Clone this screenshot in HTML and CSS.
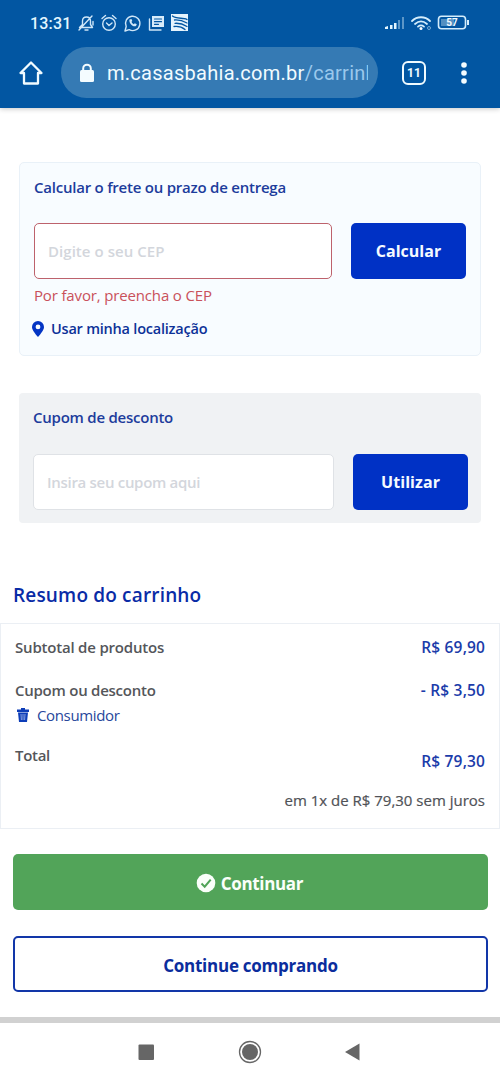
FILE: index.html
```html
<!DOCTYPE html>
<html lang="pt-BR">
<head>
<meta charset="utf-8">
<meta name="viewport" content="width=device-width, initial-scale=1">
<title>Carrinho</title>
<link rel="stylesheet" href="styles.css">
</head>
<body>
<header class="browser">
  <div class="status">
    <span class="clock">13:31</span>
    <svg class="status-left" width="112" height="20" viewBox="0 0 112 20" fill="none" stroke="#cfe6f8" stroke-width="1.4" stroke-linecap="round" stroke-linejoin="round">
      <path d="M1.500 14.500h13l-2-3V8c0-3-2-4-4-4S4.500 5 4.500 8v3.500l-3 3M7 17h3M14 3 1 17M15 8.500v3.500"/>
      <circle cx="31" cy="11" r="6.300"/><path d="M28.500 10l2.500 2.500 3-2.500M24 5.500 27.500 2.500M34.500 2.500l3.500 3"/>
      <path d="M47 18l1.200-4.500a7.200 7.200 0 1 1 3 3.200z"/>
      <path d="M51.500 6.500c-1 3.500 3.500 8 6.500 6.500l.8-1.800-2-1-1 1c-1-.5-2-1.500-2.300-2.500l.8-.8-.8-1.800z" fill="#cfe6f8" stroke="none"/>
      <path d="M74 3h12v11H74z" fill="#d8ecfb" stroke="none"/><path d="M71.500 6v11H83"/><path d="M76.500 6h7M76.500 8.700h7M76.500 11.300h4" stroke="#0256a2" stroke-width="1.200"/>
      <path d="M93 1h17v17H93z" fill="#e6f4fd" stroke="none"/>
      <path d="M94.500 3c2 2 7 2 11 2.500 2 .2 3 .5 3.500 1M96.500 7c4-.3 8 .5 12.500 3M97 10.300c4-.3 8 .7 12 3.200M96 13.500c4-.5 8 .5 11 3" stroke="#0256a2" stroke-width="1.300"/>
    </svg>
    <svg class="status-right" width="86" height="18" viewBox="0 0 86 18">
      <path d="M1 15v-2l3-1v3zM6 15v-4h2.500v4zM10 15V9h2.500v6z" fill="#e3f5ff"/><path d="M14 15V6h2v9zM18 15V3h2v12z" fill="#5c96c7"/>
      <g fill="none" stroke="#d4edfc" stroke-width="1.800" stroke-linecap="round"><path d="M28 7c5-5 13-5 18 0M31 10c4-3.500 8-3.500 12 0M34 12.600c2-1.600 4-1.600 6 0"/></g><circle cx="37" cy="14.500" r="1.500" fill="#fff"/><circle cx="45" cy="14" r="1.500" fill="none" stroke="#78add5"/>
      <rect x="54.500" y="2.200" width="27" height="12.600" rx="3" fill="none" stroke="#d4edfc" stroke-width="1.600"/><path d="M57 5h13v7H57z" fill="#538fc1"/><path d="M83 6h2v5h-2z" fill="#d4edfc"/>
      <text x="68" y="12.300" text-anchor="middle" class="battery-text">57</text>
    </svg>
  </div>
  <div class="toolbar">
    <svg class="home" width="26" height="26" viewBox="0 0 26 26" fill="none" stroke="#f1fbff" stroke-width="2.300" stroke-linejoin="round" stroke-linecap="round"><path d="M2.500 13 13 2.500 23.500 13H20v10.500H6V13z"/></svg>
    <div class="address">
      <svg width="16" height="20" viewBox="0 0 16 20"><path d="M4.200 8V5.500a3.800 3.800 0 0 1 7.600 0V8" fill="none" stroke="#f4fcff" stroke-width="2"/><rect x="1" y="7" width="14" height="12" rx="1.500" fill="#f4fcff"/></svg>
      <span class="url">m.casasbahia.com.br<span class="path">/carrinh</span></span>
    </div>
    <span class="tabs">11</span>
    <svg class="more" width="8" height="24" viewBox="0 0 8 24" fill="#f4fcff"><circle cx="4" cy="4" r="2.800"/><circle cx="4" cy="12" r="2.800"/><circle cx="4" cy="20" r="2.800"/></svg>
  </div>
</header>
<main class="page">
  <section class="card shipping">
    <h2><span class="t-ship">Calcular o frete ou prazo de entrega</span></h2>
    <div class="row"><div class="field invalid"><span class="t-cep">Digite o seu CEP</span></div><button class="btn"><span class="t-calc">Calcular</span></button></div>
    <p class="error"><span class="t-err">Por favor, preencha o CEP</span></p>
    <a class="locate"><svg width="14" height="18" viewBox="0 0 14 18"><path fill="#0435c4" fill-rule="evenodd" d="M7 1a6 6 0 0 0-6 6c0 3 3 6.500 6 10 3-3.500 6-7 6-10a6 6 0 0 0-6-6zm0 3.500a2.400 2.400 0 1 1 0 4.800 2.400 2.400 0 0 1 0-4.800z"/></svg><span class="t-loc">Usar minha localização</span></a>
  </section>
  <section class="card coupon">
    <h2><span class="t-cup">Cupom de desconto</span></h2>
    <div class="row"><div class="field"><span class="t-ins">Insira seu cupom aqui</span></div><button class="btn"><span class="t-util">Utilizar</span></button></div>
  </section>
  <h1><span class="t-res">Resumo do carrinho</span></h1>
  <section class="summary">
    <div class="line subtotal"><span class="t-sub">Subtotal de produtos</span><b class="t-price">R$ 69,90</b></div>
    <div class="line discount"><span class="t-disc">Cupom ou desconto</span><b class="t-price">- R$ 3,50</b></div>
    <div class="applied"><svg width="12" height="15" viewBox="0 0 12 15"><path fill="#0d3db8" d="M4 0h4v1.500h4V4H0V1.500h4zM1 4.500h10l-1 9.500H2z"/><path d="M4 6l.4 6M6 6v6M8 6l-.4 6" stroke="#b9c9ee" stroke-width=".7"/></svg><span class="t-cons">Consumidor</span></div>
    <div class="line total"><span class="t-tot">Total</span><b class="t-price">R$ 79,30</b></div>
    <p class="installments"><span class="t-inst">em 1x de R$ 79,30 sem juros</span></p>
  </section>
  <button class="action go"><svg width="20" height="20" viewBox="0 0 20 20"><circle cx="10" cy="10" r="9.300" fill="#fafffa"/><path d="M5.500 10.500l3.200 3.200 6-7" fill="none" stroke="#50a458" stroke-width="2"/></svg><span class="t-go">Continuar</span></button>
  <button class="action keep"><span class="t-keep">Continue comprando</span></button>
</main>
<nav class="system">
  <svg width="500" height="59" viewBox="0 0 500 59" fill="#666"><rect x="138.500" y="21.500" width="15.500" height="15.500" rx="1"/><circle cx="250" cy="29" r="10.500" fill="none" stroke="#666" stroke-width="1.300"/><circle cx="250" cy="29" r="8"/><path d="M345 29l14.500-8.500v17z"/></svg>
</nav>
</body>
</html>
```

FILE: styles.css
```css
* { box-sizing: border-box; }
body { margin: 0; width: 500px; height: 1082px; overflow: hidden; background: #fff; color: #54565a; font-family: "Open Sans", "Noto Sans", sans-serif; display: flex; flex-direction: column; }
h1, h2, p { margin: 0; }
button { border: 0; font-family: inherit; padding: 0; }
span, b { white-space: nowrap; }
svg { display: block; flex: none; }

.browser { height: 108px; flex: none; background: #0256a2; font-family: Roboto, sans-serif; box-shadow: 0 1px 5px rgba(0, 0, 0, .22); }
.status { height: 47px; padding: 0 30px; display: flex; align-items: center; }
.clock { font-size: 16px; font-weight: 500; color: #e4f7ff; letter-spacing: .2px; width: 49px; }
.status-left { margin: -1px 0 0 0; }
.status-right { margin: -1px 0 0 194px; }
.status-left { margin-left: 1px; }
.battery-text { font: 700 10px Roboto, sans-serif; fill: #f2fbff; }
.toolbar { height: 51px; display: flex; align-items: center; padding-left: 18px; }
.address { width: 317px; height: 51px; margin-left: 17px; padding-left: 18px; border-radius: 26px; background: #357ab4; display: flex; align-items: center; gap: 12px; }
.url { width: 261px; overflow: hidden; color: #f1fbff; font-size: 20px; line-height: 28px; letter-spacing: .27px; }
.path { color: #9ac8ec; }
.tabs { width: 24px; height: 24px; margin-left: 24px; border: 2.500px solid #f1fbff; border-radius: 6px; color: #f1fbff; font-size: 12px; font-weight: 700; line-height: 20px; text-align: center; }
.more { margin-left: 34px; }

.page { flex: none; height: 909px; padding-top: 54px; }
.card { margin: 0 19px; border-radius: 5px; }
.card h2 { font-size: 15px; font-weight: 600; line-height: 22px; color: #1d3c9c; }
.shipping { height: 194px; padding: 13px 14px; border: 1px solid #e9f1f8; background: #f8fcff; }
.row { display: flex; gap: 19px; }
.field { flex: 1; height: 56px; padding-left: 13px; border: 1px solid #dfe2e6; border-radius: 5px; background: #fff; color: #d3d6dc; font-size: 15px; font-weight: 600; line-height: 54px; }
.invalid { border-color: #bd626c; }
.btn { width: 115px; height: 56px; border-radius: 5px; background: #0031c5; color: #f5faff; font-size: 16px; font-weight: 700; }
.shipping .row { margin-top: 25px; }
.error { margin-top: 5px; font-size: 15px; line-height: 22px; color: #c9515b; }
.locate { margin: 11px 0 0 -3px; display: flex; align-items: center; gap: 6px; font-size: 14.500px; font-weight: 600; line-height: 24px; color: #0c3198; }
.coupon { height: 130px; margin-top: 37px; padding: 13px 13px 13px 14px; background: #f0f2f4; border-radius: 4px; }
.coupon .row { margin-top: 26px; }
h1 { margin: 57px 0 0 13px; font-size: 19px; font-weight: 600; line-height: 30px; color: #092ba6; }
.summary { height: 206px; margin-top: 13px; padding: 12px 14px; border: 1px solid #ebeff4; font-size: 15px; }
.line { display: flex; justify-content: space-between; line-height: 23px; font-weight: 600; }
.line b { color: #1b3caa; font-weight: 600; }
.discount { margin-top: 20px; }
.applied { display: flex; align-items: center; gap: 8px; padding-left: 2px; line-height: 26px; color: #28479b; }
.total { margin-top: 16px; }
.total b { margin-top: 6px; }
.installments { margin-top: 14px; text-align: right; line-height: 26px; color: #505257; -webkit-text-stroke: .2px; }
.action { width: 475px; height: 56px; margin-left: 13px; display: flex; align-items: center; justify-content: center; border-radius: 5px; font-size: 17px; font-weight: 700; }
.go { margin-top: 25px; gap: 5px; padding: 2px 2px 0 0; background: #52a459; color: #fafffa; }
.keep { margin-top: 26px; padding-top: 2px; border: 2px solid #1236a8; background: #fff; color: #0b2d9d; }
.system { flex: none; height: 65px; border-top: 6px solid #d1d1d1; background: #fff; }

/* Per-label tracking */
.t-ship { letter-spacing: -.23px; }
.t-cep { letter-spacing: .05px; }
.t-err { letter-spacing: -.15px; }
.t-loc { letter-spacing: -.22px; }
.t-cup { letter-spacing: -.24px; }
.t-ins { letter-spacing: -.3px; }
.t-util { letter-spacing: .07px; }
.t-res { letter-spacing: .17px; }
.t-sub { letter-spacing: -.2px; }
.t-disc { letter-spacing: -.25px; }
.t-cons { letter-spacing: -.35px; }
.t-tot { letter-spacing: -.3px; }
.t-price { font-size: 15.500px; letter-spacing: .2px; margin-right: -.2px; }
.t-go { letter-spacing: -.35px; }
.t-keep { letter-spacing: -.25px; }
```
